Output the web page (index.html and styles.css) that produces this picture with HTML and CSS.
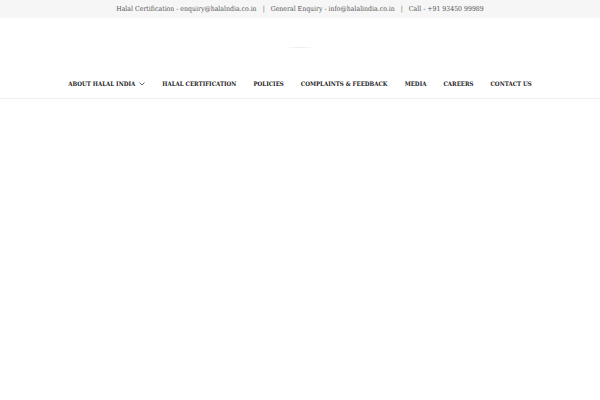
FILE: index.html
```html
<!DOCTYPE html>
<html>
<head>
<meta charset="utf-8">
<link rel="stylesheet" href="styles.css">
</head>
<body>
<div class="topbar">
  <span>Halal Certification - enquiry@halalndia.co.in</span>
  <span class="sep">|</span>
  <span>General Enquiry - info@halalindia.co.in</span>
  <span class="sep">|</span>
  <span>Call - +91 93450 99989</span>
</div>
<header class="header">
  <div class="logo"><div class="logo-line"></div></div>
  <nav class="nav">
    <a class="item">ABOUT HALAL INDIA <svg class="chev" width="6" height="4" viewBox="0 0 6 4"><path d="M0.5 0.5 L3 3 L5.5 0.5" fill="none" stroke="#555" stroke-width="0.9"/></svg></a>
    <a class="item">HALAL CERTIFICATION</a>
    <a class="item">POLICIES</a>
    <a class="item">COMPLAINTS &amp; FEEDBACK</a>
    <a class="item">MEDIA</a>
    <a class="item">CAREERS</a>
    <a class="item">CONTACT US</a>
  </nav>
</header>
</body>
</html>
```
FILE: styles.css
```css
html, body { margin: 0; padding: 0; background: #fff; }
body { font-family: "DejaVu Serif Condensed", "DejaVu Serif", "Liberation Serif", serif; }
.topbar {
  height: 18px;
  background: #f6f6f6;
  display: flex;
  justify-content: center;
  align-items: center;
  gap: 6px;
  font-size: 6.9px;
  color: #555;
}
.sep { color: #666; }
.header {
  border-bottom: 1px solid #f0f0f0;
}
.logo {
  height: 52px;
  display: flex;
  justify-content: center;
  align-items: flex-start;
}
.logo-line {
  margin-top: 29px;
  width: 24px;
  height: 1px;
  background: linear-gradient(to right, #fbfbfb, #ececec, #fbfbfb);
}
.nav {
  height: 27px;
  display: flex;
  justify-content: center;
  align-items: center;
  gap: 17px;
  padding-bottom: 1px;
}
.item {
  font-size: 6.1px;
  font-weight: bold;
  color: #222;
  display: flex;
  align-items: center;
  gap: 4px;
}
.chev { display: block; }
```
